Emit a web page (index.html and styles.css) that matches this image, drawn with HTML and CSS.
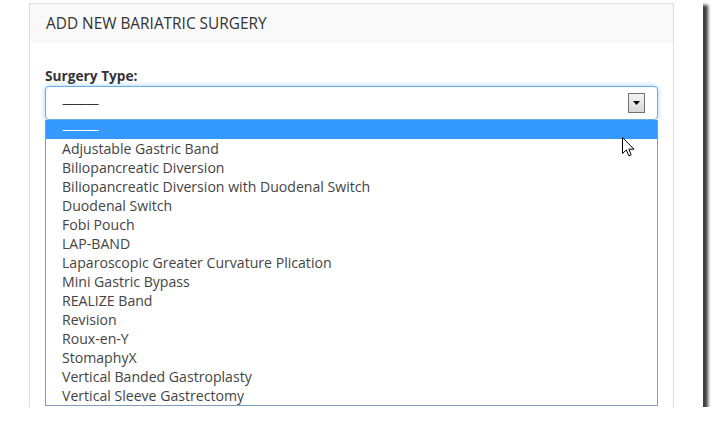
FILE: index.html
```html
<!DOCTYPE html>
<html>
<head>
<meta charset="utf-8">
<link rel="stylesheet" href="styles.css">
</head>
<body>
<div class="window">
  <div class="panel">
    <div class="panel-head">ADD NEW BARIATRIC SURGERY</div>
    <div class="panel-body">
      <div class="field-label">Surgery Type:</div>
      <div class="select-wrap">
        <div class="select">
          <span class="select-value">———</span>
          <span class="select-btn">
            <svg width="7" height="4" viewBox="0 0 7 4"><path d="M0 0H7L3.5 4Z" fill="#000"/></svg>
          </span>
        </div>
        <ul class="options">
          <li class="opt selected">———</li>
          <li class="opt">Adjustable Gastric Band</li>
          <li class="opt">Biliopancreatic Diversion</li>
          <li class="opt">Biliopancreatic Diversion with Duodenal Switch</li>
          <li class="opt">Duodenal Switch</li>
          <li class="opt">Fobi Pouch</li>
          <li class="opt">LAP-BAND</li>
          <li class="opt">Laparoscopic Greater Curvature Plication</li>
          <li class="opt">Mini Gastric Bypass</li>
          <li class="opt">REALIZE Band</li>
          <li class="opt">Revision</li>
          <li class="opt">Roux-en-Y</li>
          <li class="opt">StomaphyX</li>
          <li class="opt">Vertical Banded Gastroplasty</li>
          <li class="opt">Vertical Sleeve Gastrectomy</li>
        </ul>
      </div>
    </div>
  </div>
  <svg class="cursor" width="13" height="20" viewBox="0 0 13 20">
    <path d="M0.5 0.5V16.5L4.3 12.9L6.8 18.8L9.2 17.8L6.8 12.2H12L0.5 0.5Z" fill="#fff" stroke="#000" stroke-width="1" stroke-linejoin="miter"/>
  </svg>
</div>
</body>
</html>
```
FILE: styles.css
```css
html, body {
  margin: 0;
  padding: 0;
  background: #fff;
}
.window {
  position: relative;
  width: 703px;
  height: 407px;
  background: #fff;
  overflow: hidden;
  box-shadow: 5px 5px 3px rgba(0, 0, 0, 0.75);
  font-family: "Open Sans", "DejaVu Sans", sans-serif;
}
.panel {
  margin: 3px 0 0 29px;
  width: 645px;
  height: 440px;
  border: 1px solid #ddd;
  box-sizing: border-box;
}
.panel-head {
  height: 39px;
  background: #f9f9f9;
  padding-left: 16px;
  display: flex;
  align-items: center;
  font-size: 15.4px;
  color: #333;
}
.panel-body {
  padding: 24px 15px 0 15px;
}
.field-label {
  font-size: 13.7px;
  font-weight: bold;
  color: #333;
  line-height: 18px;
  height: 19px;
}
.select-wrap {
  position: relative;
  width: 613px;
}
.select {
  height: 34px;
  box-sizing: border-box;
  border: 1px solid #66afe9;
  border-radius: 4px;
  box-shadow: 0 0 5px rgba(102, 175, 233, 0.6);
  display: flex;
  align-items: center;
  justify-content: space-between;
  padding: 0 12px 0 16px;
  font-size: 13px;
  color: #333;
  background: #fff;
}
.select-value {
  letter-spacing: -1px;
}
.select-btn {
  width: 15px;
  height: 18px;
  border: 1px solid #707070;
  background: linear-gradient(#f4f4f4, #d8d8d8);
  display: flex;
  align-items: center;
  justify-content: center;
}
.options {
  position: absolute;
  left: 0;
  top: 100%;
  width: 613px;
  box-sizing: border-box;
  margin: 0;
  padding: 0;
  list-style: none;
  border: 1px solid #7f9db9;
  border-top: none;
  background: #fff;
}
.opt {
  height: 19px;
  line-height: 20px;
  padding-left: 16px;
  font-size: 14.1px;
  color: #444;
  white-space: nowrap;
}
.opt.selected {
  background: #3399ff;
  color: #fff;
  letter-spacing: -1px;
  line-height: 19px;
  font-size: 13px;
}
.cursor {
  position: absolute;
  left: 622px;
  top: 137px;
}
```
